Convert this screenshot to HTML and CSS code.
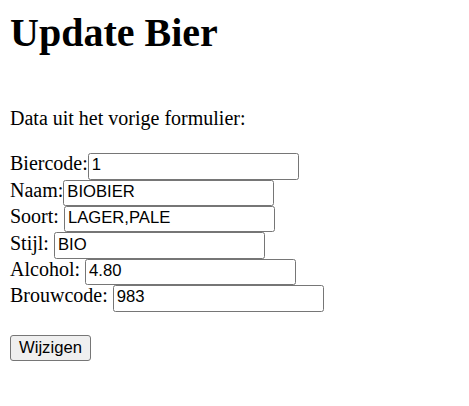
FILE: index.html
```html
<!DOCTYPE html>
<html lang="nl">
<head>
<meta charset="utf-8">
<title>Update Bier</title>
<link rel="stylesheet" href="styles.css">
</head>
<body>
<h1 class="title">Update Bier</h1>
<p class="intro">Data uit het vorige formulier:</p>
<form class="form">
  <label class="row"><span class="lbl">Biercode:</span><input class="field" type="text" value="1"></label>
  <label class="row"><span class="lbl">Naam:</span><input class="field" type="text" value="BIOBIER"></label>
  <label class="row"><span class="lbl">Soort: </span><input class="field" type="text" value="LAGER,PALE"></label>
  <label class="row"><span class="lbl">Stijl: </span><input class="field" type="text" value="BIO"></label>
  <label class="row"><span class="lbl">Alcohol: </span><input class="field" type="text" value="4.80"></label>
  <label class="row"><span class="lbl">Brouwcode: </span><input class="field" type="text" value="983"></label>
  <div class="actions"><button class="btn" type="submit">Wijzigen</button></div>
</form>
</body>
</html>
```
FILE: styles.css
```css
html, body {
  background: #ffffff;
}
body {
  margin: 10px;
  font-family: "Liberation Serif", "Times New Roman", serif;
  font-size: 20px;
  color: #000000;
}
.title {
  margin: 0;
  font-size: 40px;
  line-height: 46px;
  font-weight: bold;
}
.intro {
  margin: 50.75px 0 0;
  line-height: 23px;
}
.form {
  margin: 23.5px 0 0;
}
.row {
  display: flex;
  align-items: baseline;
}
.lbl {
  white-space: pre;
  line-height: 20px;
}
.field {
  box-sizing: border-box;
  width: 211px;
  height: 26.4px;
  margin: 0;
  padding: 0 3px 2px;
  border: 1px solid #767676;
  border-radius: 2.5px;
  background: #ffffff;
  color: #000000;
  font-family: "Liberation Sans", Arial, sans-serif;
  font-size: 16.67px;
}
.actions {
  margin-top: 23.3px;
}
.btn {
  box-sizing: border-box;
  height: 26px;
  margin: 0;
  padding: 0 8px;
  border: 1px solid #767676;
  border-radius: 3px;
  background: #efefef;
  color: #000000;
  font-family: "Liberation Sans", Arial, sans-serif;
  font-size: 16.67px;
}
```
